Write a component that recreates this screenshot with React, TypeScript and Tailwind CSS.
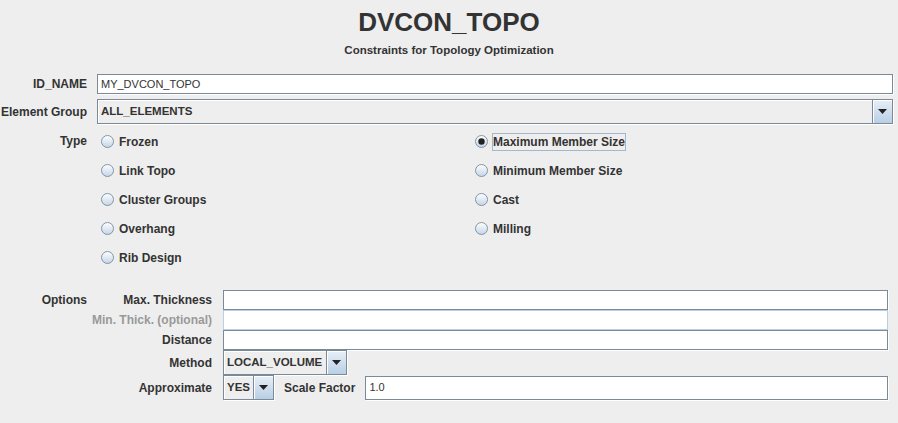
import React from "react";

const labelCls = "font-bold text-[12px] text-[#333333] whitespace-nowrap";

function Radio({ label, checked }: { label: string; checked?: boolean }) {
  const gid = "rg-" + label.replace(/\W/g, "");
  return (
    <div className="h-[29px] flex items-center pl-[4px] gap-[4px]">
      <svg width="13" height="13" viewBox="0 0 13 13">
        <defs>
          <linearGradient id={gid} x1="0" y1="0" x2="0" y2="1">
            <stop offset="0" stopColor="#ffffff" />
            <stop offset="1" stopColor="#c3d4e6" />
          </linearGradient>
        </defs>
        <circle cx="6.5" cy="6.5" r="6" fill={`url(#${gid})`} stroke="#8394a8" />
        {checked ? <circle cx="6.5" cy="6.5" r="3.2" fill="#222222" /> : null}
      </svg>
      <span
        className={`${labelCls} h-[18px] leading-[16px] border ${
          checked ? "border-[#a3b8cc]" : "border-transparent"
        }`}
      >
        {label}
      </span>
    </div>
  );
}

function TextField({ value, disabled, className = "" }: { value?: string; disabled?: boolean; className?: string }) {
  return (
    <div
      className={`bg-white border flex items-center pl-[3px] text-[11px] text-[#333333] ${
        disabled ? "border-[#b8cfe5]" : "border-[#7a8a99] shadow-[1px_1px_0_#ffffff]"
      } ${className}`}
    >
      {value}
    </div>
  );
}

function Combo({ value, className = "" }: { value: string; className?: string }) {
  return (
    <div className={`flex border border-[#7a8a99] bg-[#eeeeee] shadow-[1px_1px_0_#ffffff] ${className}`}>
      <div className="flex-1 flex items-center pl-[3px] shadow-[inset_1px_1px_0_#ffffff] font-bold text-[11.5px] text-[#333333] whitespace-nowrap overflow-hidden">
        {value}
      </div>
      <div className="w-[20px] border-l border-[#7a8a99] bg-linear-to-b from-[#e8eff7] to-[#b8cfe5] shadow-[inset_1px_1px_0_#ffffff] flex items-center justify-center">
        <svg width="9" height="5" viewBox="0 0 9 5">
          <path d="M0 0H9L4.5 5Z" fill="#222222" />
        </svg>
      </div>
    </div>
  );
}

export default function App() {
  return (
    <div className="w-[898px] h-[423px] bg-[#eeeeee] text-[#333333] font-['Liberation_Sans',Arial,sans-serif]">
      <div className="h-[44px] flex items-center justify-center text-[26px] font-bold">DVCON_TOPO</div>
      <div className="h-[14px] flex items-center justify-center text-[11.5px] font-bold">
        Constraints for Topology Optimization
      </div>

      <div className="mt-[16px] grid grid-cols-[87px_1fr] gap-x-[10px] gap-y-[5px] pr-[5px] items-center">
        <div className={`${labelCls} text-right`}>ID_NAME</div>
        <TextField value="MY_DVCON_TOPO" className="h-[20px]" />
        <div className={`${labelCls} text-right text-[11.5px]`}>Element Group</div>
        <Combo value="ALL_ELEMENTS" className="h-[25px]" />
      </div>

      <div className="mt-[3px] grid grid-cols-[87px_374px_1fr] gap-x-[10px]">
        <div className={`${labelCls} text-right h-[29px] leading-[29px]`}>Type</div>
        <div className="flex flex-col">
          <Radio label="Frozen" />
          <Radio label="Link Topo" />
          <Radio label="Cluster Groups" />
          <Radio label="Overhang" />
          <Radio label="Rib Design" />
        </div>
        <div className="flex flex-col -ml-[10px]">
          <Radio label="Maximum Member Size" checked />
          <Radio label="Minimum Member Size" />
          <Radio label="Cast" />
          <Radio label="Milling" />
        </div>
      </div>

      <div className="mt-[18px] flex pr-[10px]">
        <div className={`${labelCls} w-[87px] text-right h-[20px] leading-[20px]`}>Options</div>
        <div className="flex-1 grid grid-cols-[125px_1fr] gap-x-[11px] items-center">
          <div className={`${labelCls} text-right`}>Max. Thickness</div>
          <TextField className="h-[20px]" />
          <div className="font-bold text-[12px] text-[#999999] text-right whitespace-nowrap">Min. Thick. (optional)</div>
          <TextField className="h-[20px]" disabled />
          <div className={`${labelCls} text-right`}>Distance</div>
          <TextField className="h-[20px]" />
          <div className={`${labelCls} text-right`}>Method</div>
          <div className="h-[25px] flex items-center">
            <Combo value="LOCAL_VOLUME" className="w-[124px] h-[25px]" />
          </div>
          <div className={`${labelCls} text-right`}>Approximate</div>
          <div className="h-[25px] flex items-center">
            <Combo value="YES" className="w-[51px] h-[25px]" />
            <div className={`${labelCls} ml-[10px] mr-[10px]`}>Scale Factor</div>
            <TextField value="1.0" className="flex-1 h-[24px]" />
          </div>
        </div>
      </div>
    </div>
  );
}
